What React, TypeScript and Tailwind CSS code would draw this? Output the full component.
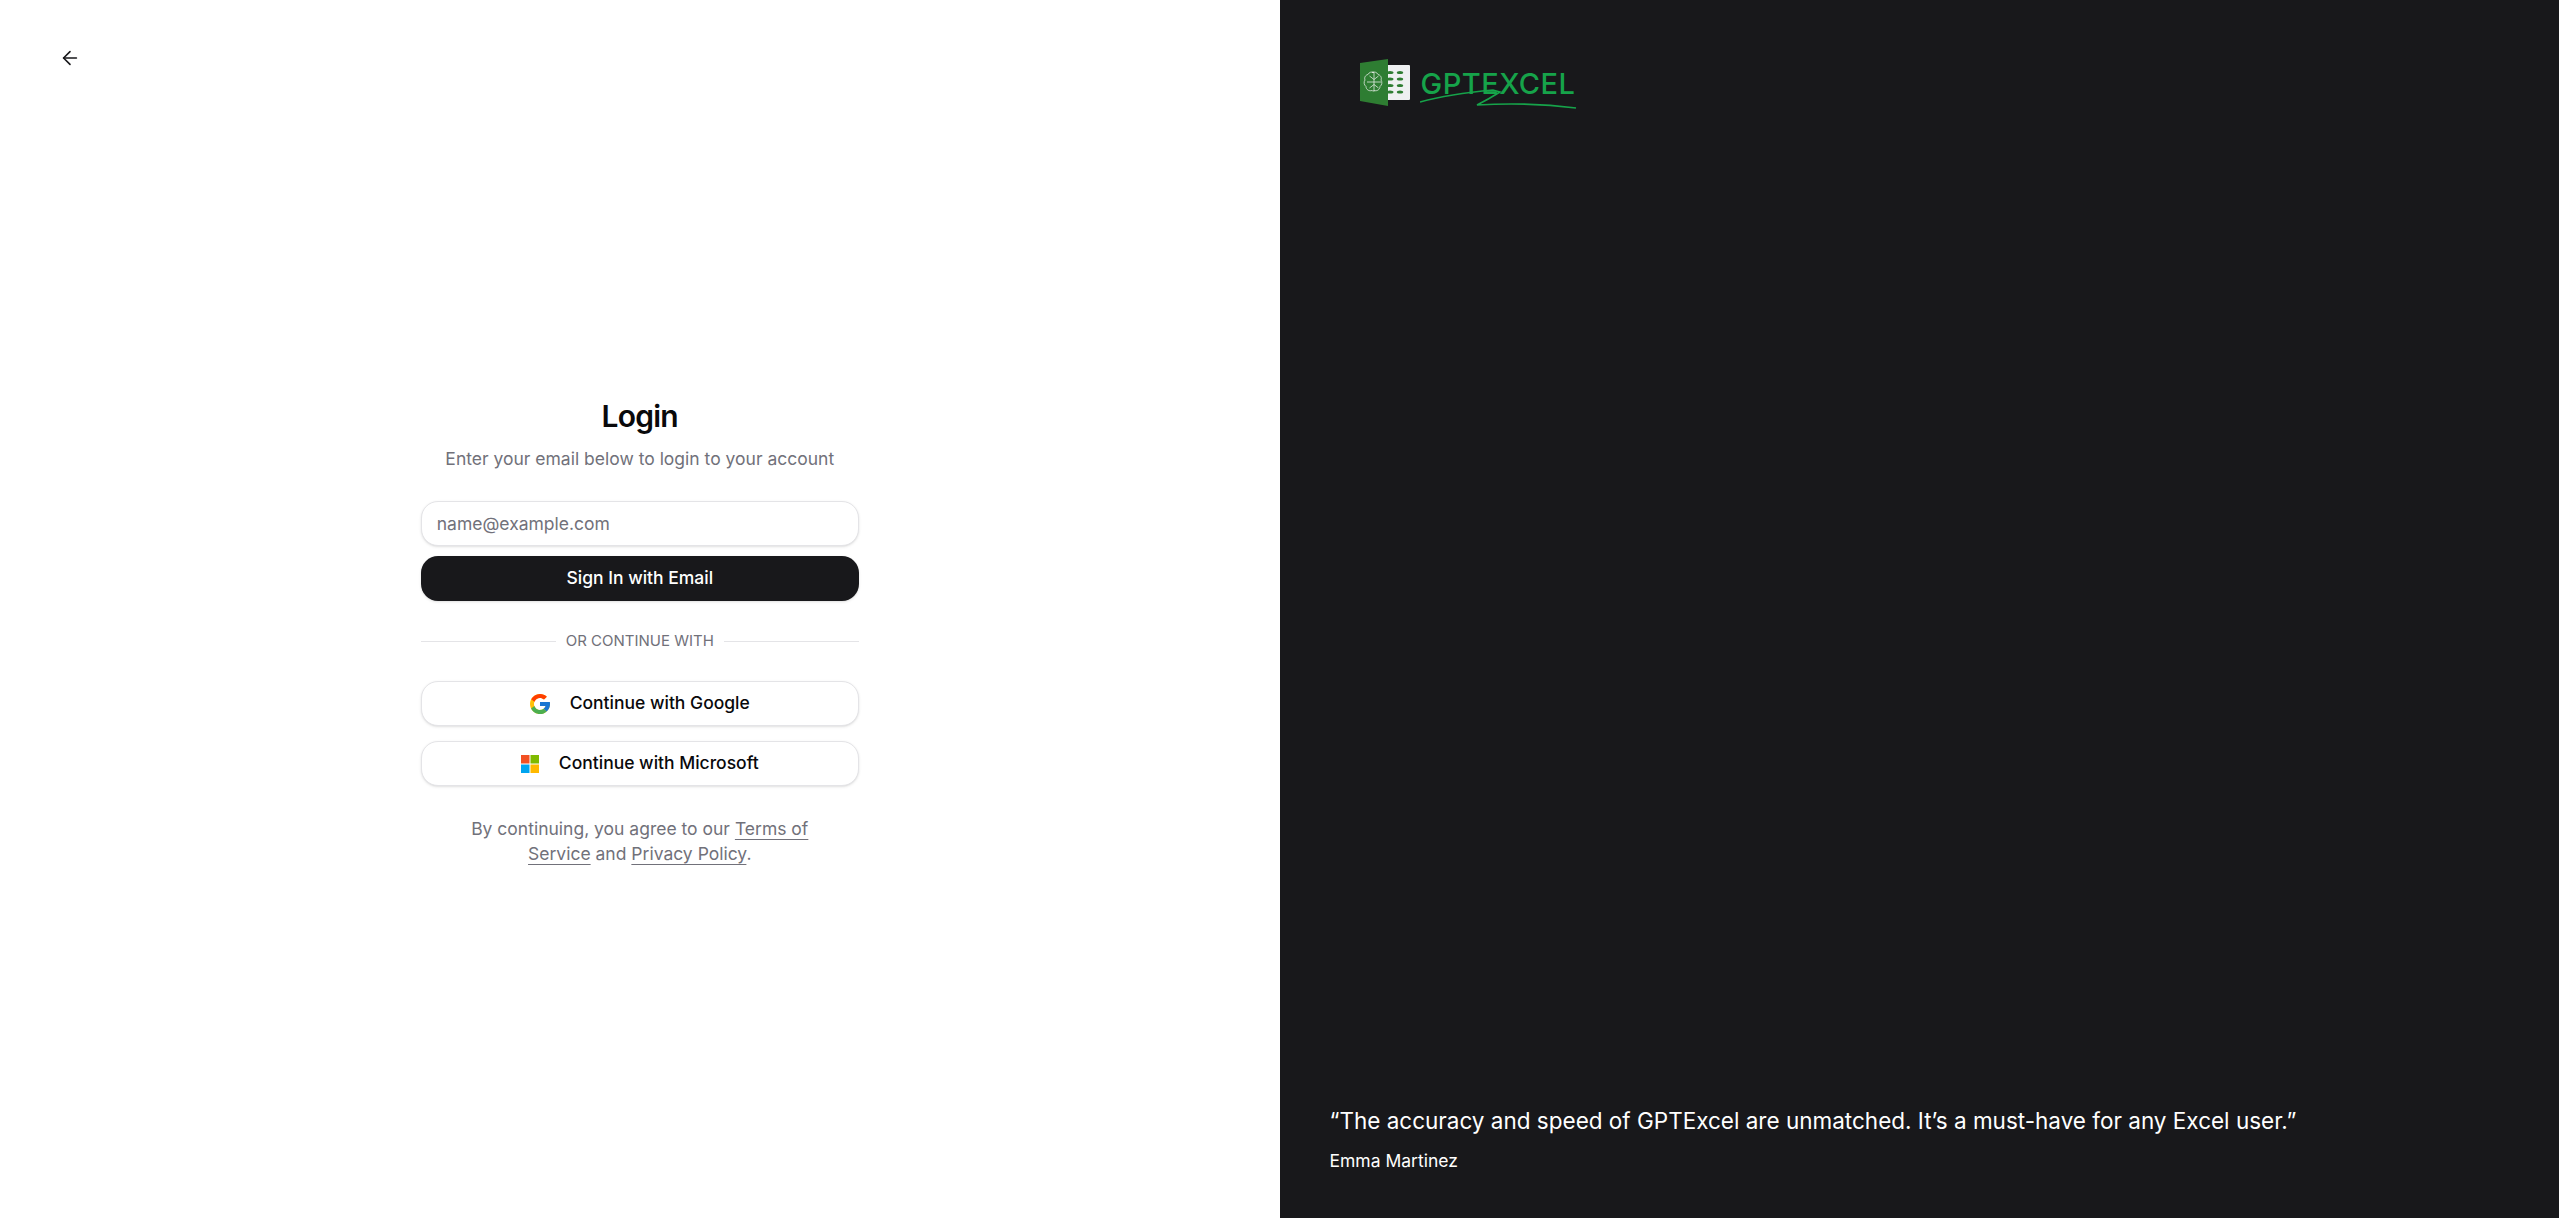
import { ArrowLeft } from "lucide-react"

function GoogleIcon() {
	return (
		<svg viewBox="0 0 48 48" className="w-6 h-6 shrink-0 -mx-[2px]">
			<path fill="#FFC107" d="M43.6 20.1H42V20H24v8h11.3C33.7 32.7 29.2 36 24 36c-6.6 0-12-5.4-12-12s5.4-12 12-12c3.1 0 5.8 1.2 8 3l5.7-5.7C34 6.1 29.3 4 24 4 13 4 4 13 4 24s9 20 20 20 20-9 20-20c0-1.3-.1-2.7-.4-3.9z" />
			<path fill="#FF3D00" d="M6.3 14.7l6.6 4.8C14.7 15.1 19 12 24 12c3.1 0 5.8 1.2 8 3l5.7-5.7C34 6.1 29.3 4 24 4 16.3 4 9.7 8.3 6.3 14.7z" />
			<path fill="#4CAF50" d="M24 44c5.2 0 9.9-2 13.4-5.2l-6.2-5.2C29.2 35.1 26.7 36 24 36c-5.2 0-9.6-3.3-11.3-8l-6.5 5C9.5 39.6 16.2 44 24 44z" />
			<path fill="#1976D2" d="M43.6 20.1H42V20H24v8h11.3c-.8 2.2-2.2 4.2-4.1 5.6l6.2 5.2C37 39.2 44 34 44 24c0-1.3-.1-2.7-.4-3.9z" />
		</svg>
	)
}

function MicrosoftIcon() {
	return (
		<svg viewBox="0 0 18 18" className="w-[18px] h-[18px] shrink-0">
			<rect x="0" y="0" width="8.5" height="8.5" fill="#F25022" />
			<rect x="9.5" y="0" width="8.5" height="8.5" fill="#7FBA00" />
			<rect x="0" y="9.5" width="8.5" height="8.5" fill="#00A4EF" />
			<rect x="9.5" y="9.5" width="8.5" height="8.5" fill="#FFB900" />
		</svg>
	)
}

function Logo() {
	return (
		<div className="relative flex items-center w-[220px] h-[50px]">
			<svg viewBox="0 0 50 50" className="w-[50px] h-[50px] shrink-0">
				<rect x="26" y="7" width="24" height="35" rx="1" fill="#eef0f1" />
				<g fill="#2e7d32">
					<ellipse cx="30" cy="14.5" rx="3.5" ry="1.6" />
					<ellipse cx="40" cy="14.5" rx="3.2" ry="1.6" />
					<ellipse cx="30" cy="21" rx="3.5" ry="1.6" />
					<ellipse cx="40" cy="21" rx="3.2" ry="1.6" />
					<ellipse cx="30" cy="27.5" rx="3.5" ry="1.6" />
					<ellipse cx="40" cy="27.5" rx="3.2" ry="1.6" />
					<ellipse cx="30" cy="34" rx="3.5" ry="1.6" />
					<ellipse cx="40" cy="34" rx="3.2" ry="1.6" />
				</g>
				<path d="M0 5 L28 1 L28 48 L0 43 Z" fill="#2e7d32" />
				<g fill="none" stroke="#dfe9df" strokeWidth="0.8">
					<path d="M14 14.500c-2-1-5-.5-6 2-2.500.5-4 3-3 5.500-1.500 2-1 5 1 6.500 0 3 3 5 6 4 .8.500 1.500.500 2 0 3 1 6-1 6-4 2-1.500 2.500-4.500 1-6.500 1-2.500-.5-5-3-5.500-1-2.500-4-3-6-2z" />
					<path d="M14 14.500v19M9.500 18l4.500 3.500M18.500 18L14 21.500M7 24h7M21 24h-7M9.500 30l4.500-3.500M18.500 30L14 26.500" />
				</g>
			</svg>
			<span className="ml-[11px] font-['Inter',sans-serif] text-[29px] leading-none tracking-[0.5px] text-[#16a34a] font-medium">GPTEXCEL</span>
			<svg viewBox="0 0 160 28" fill="none" className="absolute left-[60px] top-[26px] w-[160px] h-[28px]">
				<path d="M0 18 C25 11 50 8 73 6 L80 8 C72 13 65 17 57 21 C90 19 125 20 156 24" stroke="#16a34a" strokeWidth="1.6" />
			</svg>
		</div>
	)
}

export default function App() {
	return (
		<div className="flex h-screen bg-white font-['Inter',sans-serif]">
			<div className="relative w-1/2 flex items-center justify-center pt-[46px]">
				<ArrowLeft strokeWidth={1.75} className="absolute left-[59px] top-[47px] w-[22px] h-[22px] text-[#18181b]" />
				<div className="w-[438px] flex flex-col">
					<div className="flex flex-col items-center text-center">
						<h1 className="text-[30px] leading-[36px] font-semibold tracking-tight text-[#09090b]">Login</h1>
						<p className="mt-[12px] text-[17.5px] leading-[25px] text-[#71717a]">Enter your email below to login to your account</p>
					</div>
					<input
						placeholder="name@example.com"
						className="mt-[30px] h-[45px] w-full rounded-[17px] border border-[#e4e4e7] bg-white px-[15px] text-[17.5px] shadow-sm outline-none placeholder:text-[#71717a]"
					/>
					<button className="mt-[10px] h-[45px] w-full rounded-[17px] bg-[#18181b] text-[17.5px] font-medium text-white shadow-sm">
						Sign In with Email
					</button>
					<div className="mt-[30px] flex items-center gap-[10px]">
						<div className="h-px flex-1 bg-[#e4e4e7]"></div>
						<span className="text-[15px] leading-[20px] text-[#71717a]">OR CONTINUE WITH</span>
						<div className="h-px flex-1 bg-[#e4e4e7]"></div>
					</div>
					<button className="mt-[30px] h-[45px] w-full flex items-center justify-center gap-[20px] rounded-[17px] border border-[#e4e4e7] bg-white text-[17.5px] font-medium text-[#09090b] shadow-sm">
						<GoogleIcon />
						Continue with Google
					</button>
					<button className="mt-[15px] h-[45px] w-full flex items-center justify-center gap-[20px] rounded-[17px] border border-[#e4e4e7] bg-white text-[17.5px] font-medium text-[#09090b] shadow-sm">
						<MicrosoftIcon />
						Continue with Microsoft
					</button>
					<p className="mt-[30px] px-[30px] text-center text-[17.5px] leading-[25px] text-[#71717a]">
						By continuing, you agree to our <a className="underline underline-offset-4">Terms of Service</a> and <a className="underline underline-offset-4">Privacy Policy</a>.
					</p>
				</div>
			</div>
			<div className="w-1/2 bg-[#18181b] flex flex-col justify-between px-[50px] pt-[58px] pb-[45px]">
				<div className="pl-[30px]">
					<Logo />
				</div>
				<div className="text-white">
					<p className="text-[22.5px] leading-[35px]">“The accuracy and speed of GPTExcel are unmatched. It’s a must-have for any Excel user.”</p>
					<p className="mt-[10px] text-[17.5px] leading-[25px]">Emma Martinez</p>
				</div>
			</div>
		</div>
	)
}
